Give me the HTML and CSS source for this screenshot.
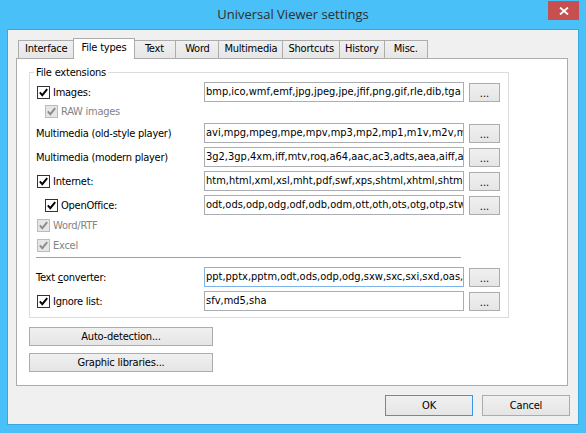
FILE: index.html
```html
<!DOCTYPE html>
<html>
<head>
<meta charset="utf-8">
<title>Universal Viewer settings</title>
<link rel="stylesheet" href="styles.css">
</head>
<body>
<div class="window">
  <div class="titlebar">
    <div class="title">Universal Viewer settings</div>
    <div class="close"><svg width="10" height="8" viewBox="0 0 10 8"><path d="M1 0.5 L9 7.5 M9 0.5 L1 7.5" stroke="#fff" stroke-width="1.8" fill="none"/></svg></div>
  </div>
  <div class="client">
    <div class="tabs">
      <div class="tab">Interface</div>
      <div class="tab active">File types</div>
      <div class="tab">Text</div>
      <div class="tab">Word</div>
      <div class="tab">Multimedia</div>
      <div class="tab">Shortcuts</div>
      <div class="tab">History</div>
      <div class="tab">Misc.</div>
    </div>
    <div class="panel">
      <fieldset class="group">
        <legend>File extensions</legend>
        <div class="row first">
          <div class="lbl"><span class="cb"><svg viewBox="0 0 11 11"><path d="M1.8 5.4 L4.3 8.2 L9.2 2.2" /></svg></span><span>Images:</span></div>
          <div class="field">bmp,ico,wmf,emf,jpg,jpeg,jpe,jfif,png,gif,rle,dib,tga</div>
          <div class="btn more">...</div>
        </div>
        <div class="row check-only raw">
          <div class="lbl indent disabled"><span class="cb"><svg viewBox="0 0 11 11"><path d="M1.8 5.4 L4.3 8.2 L9.2 2.2" /></svg></span><span>RAW images</span></div>
        </div>
        <div class="row">
          <div class="lbl"><span>Multimedia (old-style player)</span></div>
          <div class="field">avi,mpg,mpeg,mpe,mpv,mp3,mp2,mp1,m1v,m2v,mpa,m4a</div>
          <div class="btn more">...</div>
        </div>
        <div class="row">
          <div class="lbl"><span>Multimedia (modern player)</span></div>
          <div class="field">3g2,3gp,4xm,iff,mtv,roq,a64,aac,ac3,adts,aea,aiff,aifc</div>
          <div class="btn more">...</div>
        </div>
        <div class="row">
          <div class="lbl"><span class="cb"><svg viewBox="0 0 11 11"><path d="M1.8 5.4 L4.3 8.2 L9.2 2.2" /></svg></span><span>Internet:</span></div>
          <div class="field">htm,html,xml,xsl,mht,pdf,swf,xps,shtml,xhtml,shtm,stm</div>
          <div class="btn more">...</div>
        </div>
        <div class="row">
          <div class="lbl indent"><span class="cb"><svg viewBox="0 0 11 11"><path d="M1.8 5.4 L4.3 8.2 L9.2 2.2" /></svg></span><span>OpenOffice:</span></div>
          <div class="field">odt,ods,odp,odg,odf,odb,odm,ott,oth,ots,otg,otp,stw</div>
          <div class="btn more">...</div>
        </div>
        <div class="row check-only word">
          <div class="lbl disabled"><span class="cb"><svg viewBox="0 0 11 11"><path d="M1.8 5.4 L4.3 8.2 L9.2 2.2" /></svg></span><span>Word/RTF</span></div>
        </div>
        <div class="row check-only">
          <div class="lbl disabled"><span class="cb"><svg viewBox="0 0 11 11"><path d="M1.8 5.4 L4.3 8.2 L9.2 2.2" /></svg></span><span>Excel</span></div>
        </div>
        <div class="sep"></div>
        <div class="row after-sep">
          <div class="lbl"><span>Text <u>c</u>onverter:</span></div>
          <div class="field hover">ppt,pptx,pptm,odt,ods,odp,odg,sxw,sxc,sxi,sxd,oas,xls</div>
          <div class="btn more">...</div>
        </div>
        <div class="row">
          <div class="lbl"><span class="cb"><svg viewBox="0 0 11 11"><path d="M1.8 5.4 L4.3 8.2 L9.2 2.2" /></svg></span><span>Ignore list:</span></div>
          <div class="field">sfv,md5,sha</div>
          <div class="btn more">...</div>
        </div>
      </fieldset>
      <div class="btn wide auto">Auto-detection...</div>
      <div class="btn wide graphic">Graphic libraries...</div>
    </div>
    <div class="footer">
      <div class="btn default">OK</div>
      <div class="btn">Cancel</div>
    </div>
  </div>
</div>
</body>
</html>
```

FILE: styles.css
```css
* { box-sizing: border-box; }
html, body { margin: 0; padding: 0; }
body {
  width: 586px;
  height: 433px;
  overflow: hidden;
  background: #4ac0f8;
  font-family: "DejaVu Sans Condensed", "Liberation Sans", sans-serif;
  font-size: 11px;
  color: #000;
}
.window {
  width: 586px;
  height: 433px;
  display: flex;
  flex-direction: column;
  padding: 0 7px 8px;
  background: #4ac0f8;
}
.titlebar {
  height: 29px;
  flex: none;
  display: grid;
  grid-template-columns: 1fr auto 1fr;
  align-items: start;
}
.title {
  grid-column: 2;
  font-family: "Open Sans", "Noto Sans", sans-serif;
  font-size: 13px;
  color: #2f2f2f;
  line-height: 29px;
}
.close {
  grid-column: 3;
  justify-self: end;
  margin-top: 1px;
  width: 31px;
  height: 19px;
  background: #c7504f;
  display: flex;
  align-items: center;
  justify-content: center;
}
.close svg { display: block; }
.client {
  flex: 1;
  display: flex;
  flex-direction: column;
  background: #f0f0f0;
  border: 1px solid #3aa8de;
  padding: 8px 10px 8px 8px;
  min-height: 0;
}
.tabs {
  display: flex;
  align-items: flex-end;
  height: 20px;
  padding-left: 2px;
  flex: none;
  letter-spacing: -0.2px;
}
.tab {
  height: 18px;
  padding: 0 5px;
  min-width: 44px;
  border: 1px solid #acacac;
  border-bottom: 0;
  margin-left: -1px;
  background: linear-gradient(#f0f0f0, #e6e6e6);
  line-height: 16px;
  text-align: center;
  white-space: nowrap;
}
.tab:first-child { margin-left: 0; padding: 0 6px; }
.tab.active {
  height: 21px;
  margin: 0 -2px -1px -2px;
  padding: 0 8px;
  background: #fff;
  position: relative;
  z-index: 1;
  line-height: 17px;
}
.panel {
  flex: 1;
  background: #fff;
  border: 1px solid #acacac;
  padding: 7px 10px 0 12px;
  display: flex;
  flex-direction: column;
  align-items: flex-start;
}
.group {
  margin: 0;
  padding: 3px 8px 6px 6px;
  border: 1px solid #dcdcdc;
  min-width: 0;
  width: 480px;
}
.group legend {
  padding: 0 2px;
  margin-left: -2px;
  line-height: 13px;
  letter-spacing: -0.2px;
}
.row {
  display: flex;
  align-items: center;
  height: 20px;
  margin-top: 4px;
}
.row.first { margin-top: 0; }
.row.check-only { height: 16px; }
.row.raw { margin-top: 1px; }
.row.word { margin-top: 2px; }
.row.after-sep { margin-top: 9px; }
.lbl {
  width: 168px;
  flex: none;
  display: flex;
  align-items: center;
  white-space: nowrap;
  letter-spacing: -0.25px;
}
.lbl u { text-decoration: underline; text-underline-offset: 1px; }
.lbl.indent { padding-left: 8px; }
.lbl.disabled { color: #838383; }
.cb {
  width: 13px;
  height: 13px;
  flex: none;
  margin: 0 3px 0 1px;
  border: 1px solid #333;
  background: #fff;
  display: flex;
}
.cb svg { width: 11px; height: 11px; display: block; }
.cb path { fill: none; stroke: #000; stroke-width: 1.9; }
.disabled .cb { border-color: #bcbcbc; background: #e6e6e6; }
.disabled .cb path { stroke: #8c8c8c; }
.field {
  width: 260px;
  height: 20px;
  flex: none;
  border: 1px solid #abadb3;
  background: #fff;
  padding: 0 1px;
  line-height: 18px;
  overflow: hidden;
  white-space: nowrap;
}
.field.hover { border-color: #7eb4ea; }
.sep {
  height: 1px;
  width: 425px;
  margin-top: 4px;
  background: #a0a0a0;
}
.btn {
  background: linear-gradient(#f0f0f0, #e5e5e5);
  border: 1px solid #acacac;
  display: flex;
  align-items: center;
  justify-content: center;
  white-space: nowrap;
  letter-spacing: -0.2px;
}
.more {
  width: 31px;
  height: 19px;
  margin-left: 5px;
  flex: none;
  padding-top: 2px;
  letter-spacing: 0;
}
.wide { width: 184px; height: 19px; }
.auto { margin-top: 9px; }
.graphic { margin-top: 7px; }
.footer {
  display: flex;
  justify-content: flex-end;
  gap: 9px;
  margin: 9px -2px 0 0;
  flex: none;
}
.footer .btn { width: 88px; height: 21px; }
.btn.default { border-color: #3c96e6; }
```
